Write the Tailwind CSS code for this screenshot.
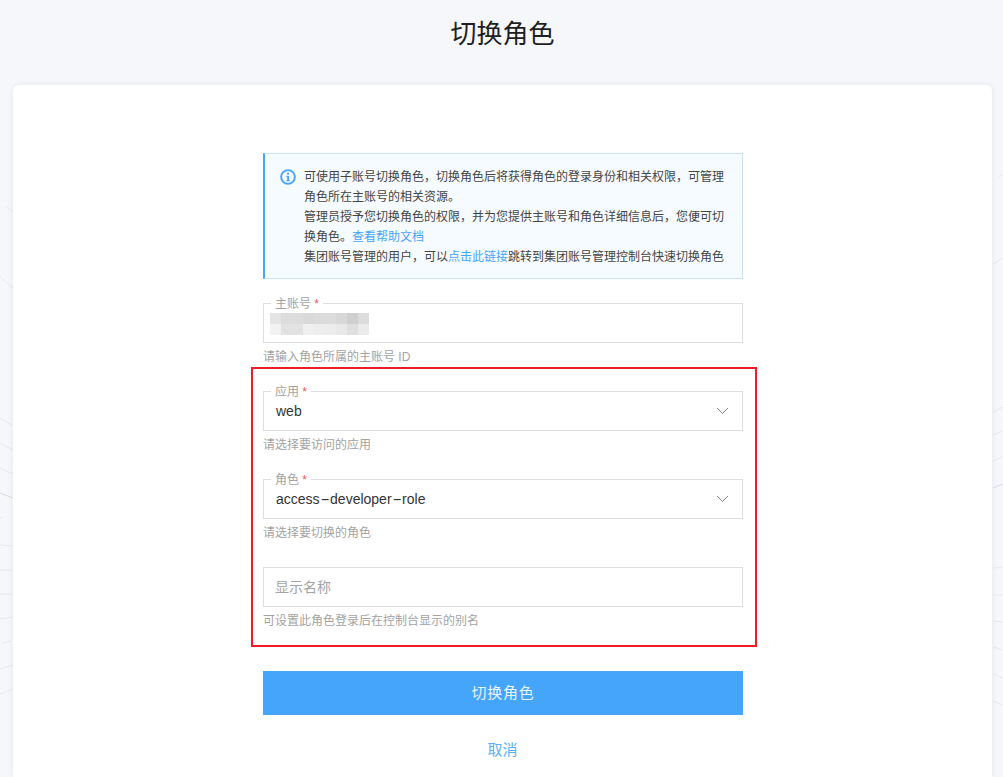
<!DOCTYPE html>
<html lang="zh-CN">
<head>
    <meta charset="UTF-8">
    <meta name="viewport" content="width=device-width, initial-scale=1.0">
    <title>切换角色</title>
    <script src="https://cdn.jsdelivr.net/npm/@tailwindcss/browser@4"></script>
</head>
<body class="h-[777px] overflow-hidden bg-[#f6f7fa] font-['Liberation_Sans','Noto_Sans_CJK_SC',sans-serif] text-[#333]">
    <!-- background lines -->
    <svg class="absolute inset-0" width="1003" height="777" fill="none" stroke="#e6e8ee" stroke-width="1">
        <path d="M6 206L13 212M0 277L13 288M0 418L13 426M0 443L13 450M0 468L13 474M2 518L0 518M0 545L13 546M0 570L13 570M0 594L13 594M0 619L13 617M2 643L11 641M0 669L13 665M0 694L13 689"/>
        <path d="M0 493L13 498" stroke="#d8dbe4"/>
        <path d="M998 178L1003 174M993 264L1003 258M993 412L1003 407M993 435L1003 431M993 461L1003 457M993 568L1003 567M993 595L1003 595M993 621L1003 622M993 647L1003 650M993 674L1003 678M993 701L1003 705"/>
        <path d="M993 488L1003 484" stroke="#d8dbe4"/>
    </svg>

    <main class="relative">
        <h1 class="h-[85px] pl-[2px] pt-[15px] text-center text-[26px] leading-[38px] text-[#1f1f1f]">切换角色</h1>

        <div class="ml-[13px] h-[692px] w-[979px] rounded-t-[6px] bg-white pt-[68px] shadow-[0_0_6px_rgba(30,40,80,0.08)]">
            <div class="ml-[250px] w-[480px]">
                <!-- alert -->
                <div class="flex h-[126px] gap-2 border border-l-[2px] border-[#c9e2f8] border-l-[#45a5fb] bg-[#f6fbff] pl-[15px] pt-[13px] text-[12px] leading-[20px] text-[#444]">
                    <svg class="mt-[2px] shrink-0" width="16" height="16" viewBox="0 0 17 17" fill="none">
                        <circle cx="8.5" cy="8.5" r="7.3" stroke="#45a5fb" stroke-width="2"/>
                        <circle cx="8.5" cy="4.9" r="1.2" fill="#45a5fb"/>
                        <path d="M6.8 7.2H9.6V11.7H10.4V13H6.8V11.7H7.6V8.5H6.8Z" fill="#45a5fb"/>
                    </svg>
                    <p class="w-[424px] shrink-0">
                        可使用子账号切换角色，切换角色后将获得角色的登录身份和相关权限，可管理角色所在主账号的相关资源。<br>
                        管理员授予您切换角色的权限，并为您提供主账号和角色详细信息后，您便可切换角色。<a href="#" class="text-[#45a5fb]">查看帮助文档</a><br>
                        集团账号管理的用户，可以<a href="#" class="text-[#45a5fb]">点击此链接</a>跳转到集团账号管理控制台快速切换角色
                    </p>
                </div>

                <!-- main account -->
                <div class="mt-[24px]">
                    <div class="relative h-[40px] border border-[#dfdfdf]">
                        <span class="absolute -top-[7px] left-[7px] bg-white px-[4px] text-[12px] leading-[14px] text-[#a3a3a3]">主账号 <span class="text-[#e25c5c]">*</span></span>
                        <div class="ml-[6px] mt-[9px] grid w-[99px] grid-cols-9">
                            <i class="h-[11px] bg-[#e4e4e4]"></i><i class="h-[11px] bg-[#dcdcdc]"></i><i class="h-[11px] bg-[#dcdcdc]"></i><i class="h-[11px] bg-[#d9d9d9]"></i><i class="h-[11px] bg-[#dbdbdb]"></i><i class="h-[11px] bg-[#dbdbdb]"></i><i class="h-[11px] bg-[#d8d8d8]"></i><i class="h-[11px] bg-[#cfcfcf]"></i><i class="h-[11px] bg-[#dcdcdc]"></i>
                            <i class="h-[11px] bg-[#f2f2f2]"></i><i class="h-[11px] bg-[#e2e2e2]"></i><i class="h-[11px] bg-[#e2e2e2]"></i><i class="h-[11px] bg-[#f0f0f0]"></i><i class="h-[11px] bg-[#ededed]"></i><i class="h-[11px] bg-[#ececec]"></i><i class="h-[11px] bg-[#e8e8e8]"></i><i class="h-[11px] bg-[#dfdfdf]"></i><i class="h-[11px] bg-[#ebebeb]"></i>
                        </div>
                    </div>
                    <p class="mt-[5px] text-[12px] leading-[18px] text-[#a3a3a3]">请输入角色所属的主账号 ID</p>
                </div>

                <!-- app -->
                <div class="mt-[25px]">
                    <div class="relative flex h-[40px] items-center justify-between border border-[#dfdfdf] pl-[12px] pr-[13px] text-[14px] text-[#333]">
                        <span class="absolute -top-[7px] left-[7px] bg-white px-[4px] text-[12px] leading-[14px] text-[#a3a3a3]">应用 <span class="text-[#e25c5c]">*</span></span>
                        <span>web</span>
                        <svg width="13" height="8" viewBox="0 0 13 8" fill="none" stroke="#888" stroke-width="1"><path d="M1 1L6.5 6.5L12 1"/></svg>
                    </div>
                    <p class="mt-[5px] text-[12px] leading-[18px] text-[#a3a3a3]">请选择要访问的应用</p>
                </div>

                <!-- role -->
                <div class="mt-[25px]">
                    <div class="relative flex h-[40px] items-center justify-between border border-[#dfdfdf] pl-[12px] pr-[13px] text-[14px] text-[#333]">
                        <span class="absolute -top-[7px] left-[7px] bg-white px-[4px] text-[12px] leading-[14px] text-[#a3a3a3]">角色 <span class="text-[#e25c5c]">*</span></span>
                        <span>access<span class="inline-block w-[10.5px] scale-x-[2] text-center">-</span>developer<span class="inline-block w-[10.5px] scale-x-[2] text-center">-</span>role</span>
                        <svg width="13" height="8" viewBox="0 0 13 8" fill="none" stroke="#888" stroke-width="1"><path d="M1 1L6.5 6.5L12 1"/></svg>
                    </div>
                    <p class="mt-[5px] text-[12px] leading-[18px] text-[#a3a3a3]">请选择要切换的角色</p>
                </div>

                <!-- display name -->
                <div class="mt-[25px]">
                    <div class="flex h-[40px] items-center border border-[#dfdfdf] pl-[11px] text-[14px] text-[#a3a3a3]">显示名称</div>
                    <p class="mt-[5px] text-[12px] leading-[18px] text-[#a3a3a3]">可设置此角色登录后在控制台显示的别名</p>
                </div>

                <button class="mt-[41px] block h-[44px] w-full bg-[#45a5fb] text-[15px] tracking-[0.7px] text-[#e8f4ff]">切换角色</button>
                <a href="#" class="mt-[24px] block pr-[1px] text-center text-[15px] leading-[22px] text-[#5aaefb]">取消</a>
            </div>
        </div>

        <!-- annotation box -->
        <div class="absolute left-[251px] top-[367px] h-[280px] w-[506px] border-2 border-[#ee1c25]"></div>
    </main>
</body>
</html>
